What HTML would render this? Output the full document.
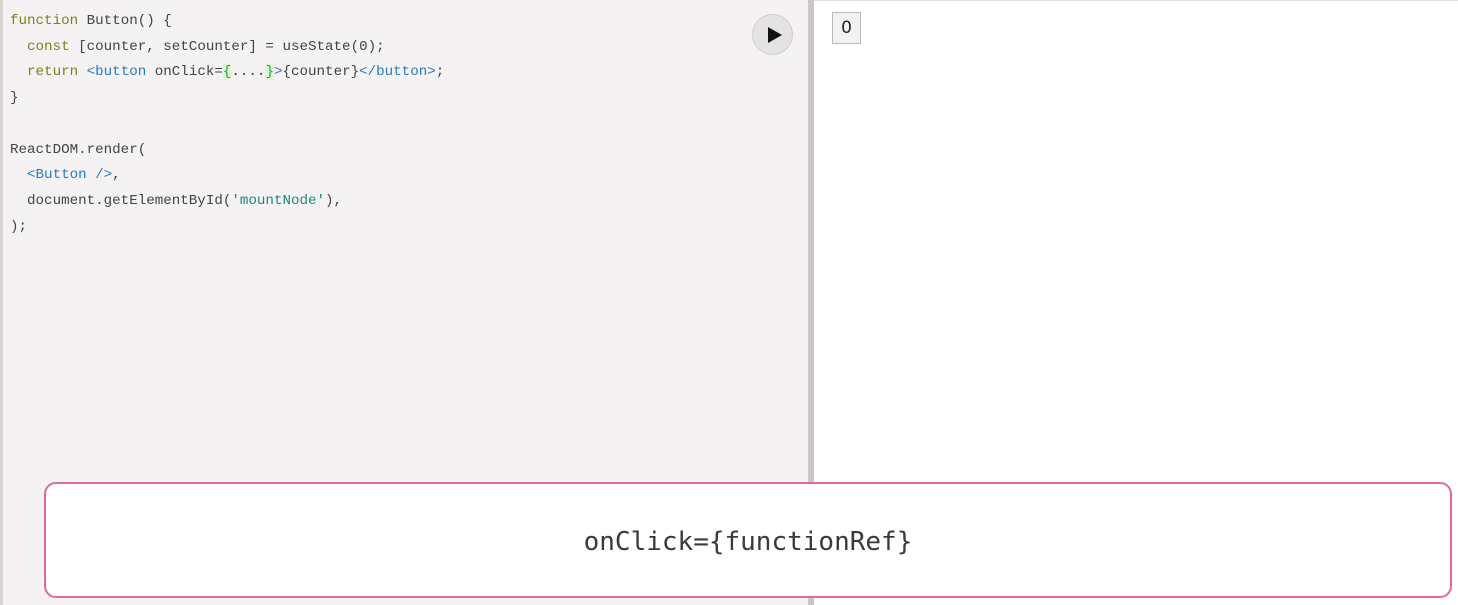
<!DOCTYPE html>
<html><head><style>
body{margin:0;width:1458px;height:605px;overflow:hidden;background:#fff;position:relative;font-family:"Liberation Mono",monospace}
#left{position:absolute;left:0;top:0;width:808px;height:605px;background:#f4f2f2;border-left:3px solid #d6d3d0;box-sizing:border-box}
#div{position:absolute;left:808px;top:0;width:6px;height:605px;background:#c9c6c4}
#top{position:absolute;left:814px;top:0;right:0;height:1px;background:#e0e0e0}
pre{position:absolute;left:10px;top:9px;margin:0;font:14.2px/25.7px "Liberation Mono",monospace;color:#444}
.k{color:#80801a}.t{color:#2a7ac0}.s{color:#1a8a7a}.g{color:#2aa02a;background:#dff5d8}
#play{position:absolute;left:752px;top:14px;width:41px;height:41px;border-radius:50%;background:#e4e2e2;border:1px solid #d0cece;box-sizing:border-box}
#play:after{content:"";position:absolute;left:15px;top:12px;border-left:14px solid #111;border-top:8px solid transparent;border-bottom:8px solid transparent}
#btn{position:absolute;left:832px;top:12px;width:29px;height:32px;box-sizing:border-box;border:1px solid #bbb;background:#f2f2f2;font:17px "DejaVu Sans",sans-serif;text-align:center;line-height:30px;color:#222}
#box{position:absolute;left:44px;top:482px;width:1408px;height:116px;box-sizing:border-box;border:2px solid #e06a90;border-radius:12px;background:#fff;text-align:center;font:26px/116px "DejaVu Sans Mono","Liberation Mono",monospace;color:#3a3a3a}
</style></head><body>
<div id="left"></div><div id="div"></div><div id="top"></div>
<pre><span class="k">function</span> Button() {
  <span class="k">const</span> [counter, setCounter] = useState(0);
  <span class="k">return</span> <span class="t">&lt;button</span> onClick=<span class="g">{</span>....<span class="g">}</span><span class="t">&gt;</span>{counter}<span class="t">&lt;/button&gt;</span>;
}

ReactDOM.render(
  <span class="t">&lt;Button /&gt;</span>,
  document.getElementById(<span class="s">'mountNode'</span>),
);</pre>
<div id="play"></div>
<div id="btn">0</div>
<div id="box">onClick={functionRef}</div>
</body></html>
